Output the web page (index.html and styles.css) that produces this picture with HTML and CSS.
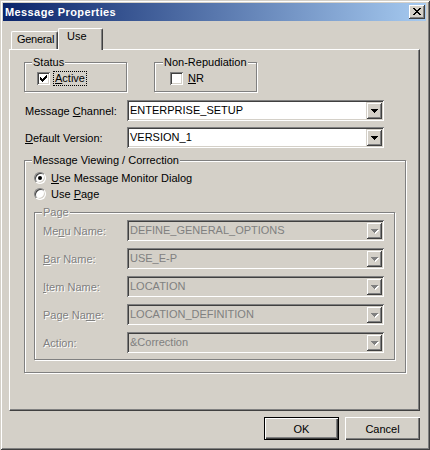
FILE: index.html
```html
<!DOCTYPE html>
<html>
<head>
<meta charset="utf-8">
<link rel="stylesheet" href="styles.css">
</head>
<body>
<div class="window">
  <div class="titlebar">
    <span class="title">Message Properties</span>
    <span class="close">
      <svg width="8" height="7" viewBox="0 0 8 7" shape-rendering="crispEdges"><path fill="#000" d="M0 0h2v1H0zM6 0h2v1H6zM1 1h2v1H1zM5 1h2v1H5zM2 2h4v1H2zM3 3h2v1H3zM2 4h4v1H2zM1 5h2v1H1zM5 5h2v1H5zM0 6h2v1H0zM6 6h2v1H6z"/></svg>
    </span>
  </div>
  <div class="body">
    <div class="tabs">
      <div class="tab tab-general">General</div>
      <div class="tab tab-active">Use</div>
    </div>
    <div class="panel">
      <div class="top-groups">
        <div class="group group-small">
          <div class="legend legend-status">Status</div>
          <div class="check-row check-status">
            <span class="checkbox">
              <svg width="7" height="7" viewBox="0 0 7 7" shape-rendering="crispEdges"><path fill="#000" d="M0 2h1v3H0zM1 3h1v3H1zM2 4h1v3H2zM3 3h1v3H3zM4 2h1v3H4zM5 1h1v3H5zM6 0h1v3H6z"/></svg>
            </span>
            <span class="check-label focused"><u>A</u>ctive</span>
          </div>
        </div>
        <div class="group group-small">
          <div class="legend legend-nr">Non-Repudiation</div>
          <div class="check-row check-nr">
            <span class="checkbox"></span>
            <span class="check-label"><u>N</u>R</span>
          </div>
        </div>
      </div>

      <div class="field field-main first">
        <span class="field-label">Message <u>C</u>hannel:</span>
        <div class="combo">
          <span class="value">ENTERPRISE_SETUP</span>
          <span class="arrow"><svg width="7" height="4" viewBox="0 0 7 4" shape-rendering="crispEdges"><path fill="#000" d="M0 0h7v1H0zM1 1h5v1H1zM2 2h3v1H2zM3 3h1v1H3z"/></svg></span>
        </div>
      </div>
      <div class="field field-main">
        <span class="field-label"><u>D</u>efault Version:</span>
        <div class="combo">
          <span class="value">VERSION_1</span>
          <span class="arrow"><svg width="7" height="4" viewBox="0 0 7 4" shape-rendering="crispEdges"><path fill="#000" d="M0 0h7v1H0zM1 1h5v1H1zM2 2h3v1H2zM3 3h1v1H3z"/></svg></span>
        </div>
      </div>

      <div class="group group-mvc">
        <div class="legend legend-mvc">Message Viewing / Correction</div>
        <div class="radio-row first-radio">
          <span class="radio checked"></span>
          <span class="radio-label"><u>U</u>se Message Monitor Dialog</span>
        </div>
        <div class="radio-row">
          <span class="radio"></span>
          <span class="radio-label">Use <u>P</u>age</span>
        </div>

        <div class="group group-page">
          <div class="legend legend-page disabled">Page</div>
          <div class="page-fields">
            <div class="field field-page">
              <span class="field-label disabled">Me<u>n</u>u Name:</span>
              <div class="combo combo-disabled">
                <span class="value">DEFINE_GENERAL_OPTIONS</span>
                <span class="arrow"><svg width="8" height="5" viewBox="0 0 8 5" shape-rendering="crispEdges"><path fill="#fff" d="M1 1h7v1H1zM2 2h5v1H2zM3 3h3v1H3zM4 4h1v1H4z"/><path fill="#808080" d="M0 0h7v1H0zM1 1h5v1H1zM2 2h3v1H2zM3 3h1v1H3z"/></svg></span>
              </div>
            </div>
            <div class="field field-page">
              <span class="field-label disabled"><u>B</u>ar Name:</span>
              <div class="combo combo-disabled">
                <span class="value">USE_E-P</span>
                <span class="arrow"><svg width="8" height="5" viewBox="0 0 8 5" shape-rendering="crispEdges"><path fill="#fff" d="M1 1h7v1H1zM2 2h5v1H2zM3 3h3v1H3zM4 4h1v1H4z"/><path fill="#808080" d="M0 0h7v1H0zM1 1h5v1H1zM2 2h3v1H2zM3 3h1v1H3z"/></svg></span>
              </div>
            </div>
            <div class="field field-page">
              <span class="field-label disabled"><u>I</u>tem Name:</span>
              <div class="combo combo-disabled">
                <span class="value">LOCATION</span>
                <span class="arrow"><svg width="8" height="5" viewBox="0 0 8 5" shape-rendering="crispEdges"><path fill="#fff" d="M1 1h7v1H1zM2 2h5v1H2zM3 3h3v1H3zM4 4h1v1H4z"/><path fill="#808080" d="M0 0h7v1H0zM1 1h5v1H1zM2 2h3v1H2zM3 3h1v1H3z"/></svg></span>
              </div>
            </div>
            <div class="field field-page">
              <span class="field-label disabled">Page Na<u>m</u>e:</span>
              <div class="combo combo-disabled">
                <span class="value">LOCATION_DEFINITION</span>
                <span class="arrow"><svg width="8" height="5" viewBox="0 0 8 5" shape-rendering="crispEdges"><path fill="#fff" d="M1 1h7v1H1zM2 2h5v1H2zM3 3h3v1H3zM4 4h1v1H4z"/><path fill="#808080" d="M0 0h7v1H0zM1 1h5v1H1zM2 2h3v1H2zM3 3h1v1H3z"/></svg></span>
              </div>
            </div>
            <div class="field field-page">
              <span class="field-label disabled">Action:</span>
              <div class="combo combo-disabled">
                <span class="value">&amp;Correction</span>
                <span class="arrow"><svg width="8" height="5" viewBox="0 0 8 5" shape-rendering="crispEdges"><path fill="#fff" d="M1 1h7v1H1zM2 2h5v1H2zM3 3h3v1H3zM4 4h1v1H4z"/><path fill="#808080" d="M0 0h7v1H0zM1 1h5v1H1zM2 2h3v1H2zM3 3h1v1H3z"/></svg></span>
              </div>
            </div>
          </div>
        </div>
      </div>
    </div>
    <div class="buttons">
      <button class="btn btn-default">OK</button>
      <button class="btn">Cancel</button>
    </div>
  </div>
</div>
</body>
</html>
```

FILE: styles.css
```css
html, body {
  margin: 0;
  padding: 0;
  background: #D4D0C8;
}

body {
  font-family: "Liberation Sans", Arial, sans-serif;
  font-size: 11px;
  color: #000;
}

u {
  text-decoration: underline;
  text-underline-offset: 1px;
}

.window {
  width: 430px;
  height: 450px;
  box-sizing: border-box;
  padding: 3px 4px 4px 3px;
  background: #D4D0C8;
  box-shadow: inset 1px 1px #D4D0C8, inset -1px -1px #404040, inset 2px 2px #fff, inset -2px -2px #808080;
  display: flex;
  flex-direction: column;
}

.titlebar {
  height: 18px;
  flex-shrink: 0;
  background: linear-gradient(to right, #0A246A, #A6CAF0);
  display: flex;
  align-items: center;
  padding: 0 1px 0 2px;
}

.title {
  flex: 1;
  color: #fff;
  font-weight: bold;
  font-size: 11px;
  letter-spacing: 0.4px;
  line-height: 13px;
}

.close {
  width: 16px;
  height: 14px;
  box-sizing: border-box;
  background: #D4D0C8;
  box-shadow: inset -1px -1px #404040, inset 1px 1px #fff, inset -2px -2px #808080;
  display: flex;
  align-items: center;
  justify-content: center;
  padding: 0 1px 1px 0;
}

.close svg, .checkbox svg, .arrow svg {
  display: block;
}

.body {
  padding-left: 6px;
  display: flex;
  flex-direction: column;
}

/* Tabs */
.tabs {
  height: 21px;
  margin-top: 7px;
  padding-left: 2px;
  display: flex;
  align-items: flex-end;
  position: relative;
  z-index: 1;
}

.tab {
  box-sizing: border-box;
  background: #D4D0C8;
  border-top: 1px solid #fff;
  border-left: 1px solid #fff;
  border-right: 1px solid #404040;
  box-shadow: inset -1px 0 #808080;
  border-radius: 2px 2px 0 0;
  line-height: 13px;
  padding-top: 1px;
  white-space: nowrap;
}

.tab-general {
  width: 47px;
  height: 18px;
  padding-left: 5px;
  letter-spacing: -0.3px;
}

.tab-active {
  width: 45px;
  height: 22px;
  margin-bottom: -1px;
  padding-left: 8px;
}

/* Panel */
.panel {
  width: 411px;
  height: 362px;
  box-sizing: border-box;
  border-top: 1px solid #fff;
  border-left: 1px solid #fff;
  border-right: 1px solid #404040;
  border-bottom: 1px solid #404040;
  box-shadow: inset -1px -1px #808080;
  padding: 12px 0 0 14px;
  display: flex;
  flex-direction: column;
  align-items: flex-start;
}

.top-groups {
  display: flex;
  gap: 27px;
}

.group {
  box-sizing: border-box;
  border: 1px solid #808080;
  box-shadow: inset 1px 1px #fff, 1px 1px #fff;
  display: flex;
  flex-direction: column;
  align-items: flex-start;
}

.group-small {
  width: 103px;
  height: 30px;
}

.legend {
  margin-top: -7px;
  line-height: 13px;
  padding: 0 1px;
  background: #D4D0C8;
  white-space: nowrap;
}

.legend-status { margin-left: 7px; }
.legend-nr { margin-left: 8px; }
.legend-mvc { margin-left: 7px; }
.legend-page { margin-left: 7px; }

.check-row {
  display: flex;
  align-items: center;
  height: 15px;
  margin-top: 2px;
}

.check-status { margin-left: 12px; }
.check-nr { margin-left: 15px; }

.checkbox {
  width: 13px;
  height: 13px;
  box-sizing: border-box;
  background: #fff;
  box-shadow: inset 1px 1px #808080, inset -1px -1px #fff, inset 2px 2px #404040, inset -2px -2px #D4D0C8;
  padding: 3px;
}

.check-label {
  margin-left: 3px;
  border: 1px dotted transparent;
  padding: 0 1px;
  line-height: 13px;
}

.check-label.focused {
  border-color: #000;
}

/* Fields */
.field {
  display: flex;
  align-items: center;
}

.field-main {
  margin-left: 1px;
  margin-top: 6px;
}

.field-main.first {
  margin-top: 8px;
}

.field-main .field-label {
  width: 102px;
  flex-shrink: 0;
}

.combo {
  width: 257px;
  height: 21px;
  box-sizing: border-box;
  background: #fff;
  box-shadow: inset 1px 1px #808080, inset -1px -1px #fff, inset 2px 2px #404040, inset -2px -2px #D4D0C8;
  padding: 2px;
  display: flex;
  align-items: center;
}

.combo .value {
  flex: 1;
  padding-left: 1px;
  line-height: 13px;
  white-space: nowrap;
}

.arrow {
  width: 16px;
  height: 17px;
  box-sizing: border-box;
  background: #D4D0C8;
  box-shadow: inset 1px 1px #D4D0C8, inset -1px -1px #404040, inset 2px 2px #fff, inset -2px -2px #808080;
  display: flex;
  align-items: center;
  justify-content: center;
  padding: 1px 0 0 1px;
}

.combo-disabled {
  background: #D4D0C8;
}

.combo-disabled .value {
  color: #808080;
}

.combo-disabled .arrow {
  padding: 2px 0 0 2px;
}

.disabled {
  color: #808080;
  text-shadow: 1px 1px 0 #fff;
}

/* Message viewing group */
.group-mvc {
  width: 382px;
  height: 213px;
  margin-top: 12px;
}

.radio-row {
  display: flex;
  align-items: center;
  height: 16px;
  margin-left: 9px;
}

.radio-row.first-radio {
  margin-top: 3px;
}

.radio {
  width: 12px;
  height: 12px;
  box-sizing: border-box;
  border-radius: 50%;
  background: #fff;
  border: 1px solid;
  border-color: #808080 #fff #fff #808080;
  box-shadow: inset 1px 1px #404040, inset -1px -1px #D4D0C8;
  display: flex;
  align-items: center;
  justify-content: center;
}

.radio.checked::after {
  content: "";
  width: 4px;
  height: 4px;
  border-radius: 50%;
  background: #000;
}

.radio-label {
  margin-left: 5px;
  line-height: 13px;
}

.group-page {
  width: 361px;
  height: 148px;
  margin-top: 10px;
  margin-left: 9px;
}

.page-fields {
  display: flex;
  flex-direction: column;
  gap: 7px;
  margin-top: 1px;
}

.field-page {
  margin-left: 8px;
}

.field-page .field-label {
  width: 84px;
  flex-shrink: 0;
}

/* Buttons */
.buttons {
  width: 411px;
  margin-top: 6px;
  display: flex;
  justify-content: flex-end;
  gap: 6px;
}

.btn {
  width: 75px;
  height: 23px;
  box-sizing: border-box;
  border: 0;
  padding: 0;
  margin: 0;
  background: #D4D0C8;
  font-family: "Liberation Sans", Arial, sans-serif;
  font-size: 11px;
  color: #000;
  box-shadow: inset 1px 1px #fff, inset -1px -1px #404040, inset -2px -2px #808080;
}

.btn-default {
  border: 1px solid #000;
}
```
